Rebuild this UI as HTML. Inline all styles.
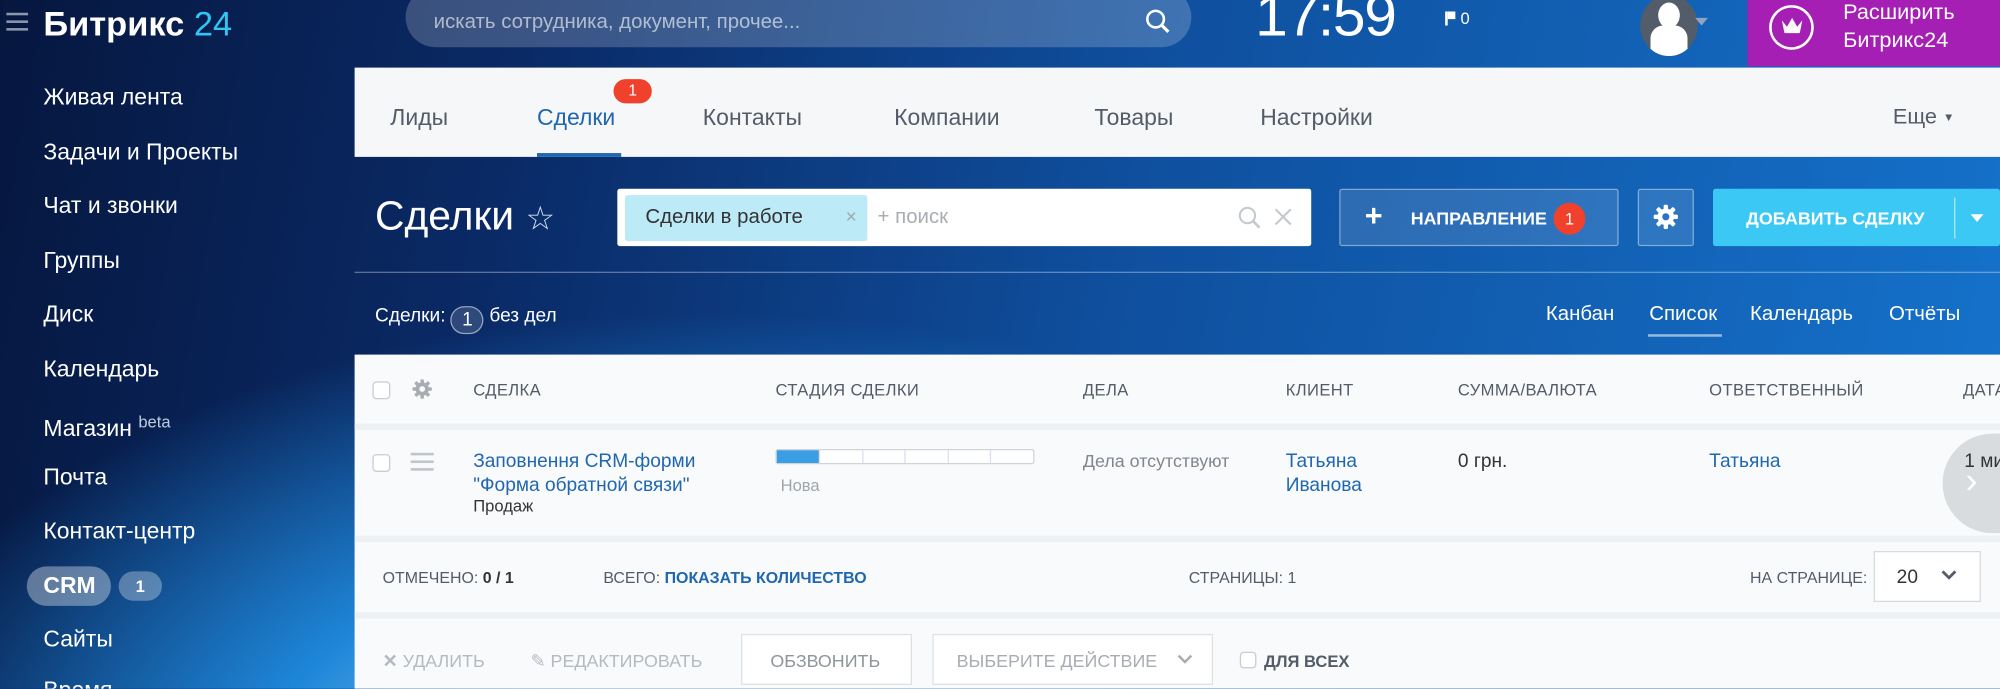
<!DOCTYPE html>
<html><head><meta charset="utf-8">
<style>
*{margin:0;padding:0;box-sizing:border-box}
html,body{width:2000px;height:689px;overflow:hidden}
body{font-family:"Liberation Sans",Arial,sans-serif;background:#0c2a63}
#w{position:absolute;left:0;top:0;width:1568px;height:540px;transform:scale(1.27551);transform-origin:0 0;overflow:hidden;
background:radial-gradient(ellipse 900px 500px at 560px 620px,#e8f4fb 0%,#7fc3ee 18%,#1e86d8 40%,rgba(20,100,200,0) 75%),linear-gradient(100deg,#06173f 0%,#0a2a66 25%,#0f4f9e 55%,#1573cc 100%)}
.a{position:absolute;white-space:nowrap}
.side{color:#fff;font-size:18px;left:34px;line-height:20px}
.tab{top:82px;font-size:18px;color:#535c69;line-height:20px}
.hd{top:298px;font-size:13px;color:#535c69;letter-spacing:.3px;line-height:15px}
.lnk{color:#2067b0}
.ft{font-size:12.5px;color:#535c69;line-height:14px;top:446px}
.cb{position:absolute;width:14px;height:14px;border:1px solid #c6cdd3;border-radius:3px;background:#fff}
</style></head><body><div id="w">
<div class="a" style="left:5px;top:10px;width:17px">
<div style="height:2px;background:#8a97ac;margin-bottom:4px"></div><div style="height:2px;background:#8a97ac;margin-bottom:4px"></div><div style="height:2px;background:#8a97ac"></div></div>
<div class="a" style="left:34px;top:4px;font-size:27px;color:#fff;font-weight:bold;line-height:30px">Битрикс <span style="color:#2fc6f6;font-weight:normal">24</span></div>
<div class="a" style="left:318px;top:-10px;width:616px;height:47px;border-radius:24px;background:rgba(255,255,255,.2)"></div>
<div class="a" style="left:340px;top:9px;font-size:16px;color:rgba(255,255,255,.6);line-height:18px">искать сотрудника, документ, прочее...</div>
<svg class="a" style="left:897px;top:6px" width="22" height="22" viewBox="0 0 22 22"><circle cx="9" cy="9" r="6.5" fill="none" stroke="#fff" stroke-width="2"/><path d="M14 14l5 5" stroke="#fff" stroke-width="2.5"/></svg>
<div class="a" style="left:984px;top:-14px;font-size:46px;color:#fff;font-weight:300;line-height:52px;letter-spacing:-1px">17:59</div>
<div class="a" style="left:1133px;top:7px;font-size:13px;color:#fff;line-height:15px"><span style="display:inline-block;width:2px;height:11px;background:#fff;vertical-align:-1px"></span><span style="display:inline-block;width:6px;height:6px;background:#fff;vertical-align:4px;margin-right:4px"></span>0</div>
<div class="a" style="left:1286px;top:-4px;width:45px;height:48px;border-radius:50%;background:#535c69;overflow:hidden">
<div style="position:absolute;left:14px;top:6px;width:17px;height:20px;border-radius:50%;background:#fff"></div>
<div style="position:absolute;left:8px;top:24px;width:29px;height:24px;border-radius:10px 10px 0 0;background:#fff"></div></div>
<div class="a" style="left:1328px;top:14px;border-left:5px solid transparent;border-right:5px solid transparent;border-top:6px solid #8fa3c2;left:1329px"></div>
<div class="a" style="left:1370px;top:0;width:198px;height:52px;background:#a51fb4"></div>
<div class="a" style="left:1387px;top:4px;width:35px;height:35px;border:2px solid #fff;border-radius:50%"></div>
<svg class="a" style="left:1395px;top:12px" width="20" height="16" viewBox="0 0 20 16"><path d="M2 4l4 5 4-7 4 7 4-5-2 10H4z" fill="#fff"/></svg>
<div class="a" style="left:1445px;top:-1px;font-size:17px;color:#fff;line-height:22px">Расширить<br>Битрикс24</div>
<div class="a side" style="top:66px">Живая лента</div>
<div class="a side" style="top:109px">Задачи и Проекты</div>
<div class="a side" style="top:151px">Чат и звонки</div>
<div class="a side" style="top:194px">Группы</div>
<div class="a side" style="top:236px">Диск</div>
<div class="a side" style="top:279px">Календарь</div>
<div class="a side" style="top:321px">Магазин <sup style="font-size:13px;color:#bcd">beta</sup></div>
<div class="a side" style="top:364px">Почта</div>
<div class="a side" style="top:406px">Контакт-центр</div>
<div class="a" style="left:21px;top:444px;width:66px;height:31px;border-radius:16px;background:rgba(255,255,255,.35)"></div>
<div class="a side" style="top:449px;font-weight:bold">CRM</div>
<div class="a" style="left:93px;top:448px;width:34px;height:23px;border-radius:12px;background:rgba(255,255,255,.3);color:#fff;font-size:13px;font-weight:bold;text-align:center;line-height:23px">1</div>
<div class="a side" style="top:491px">Сайты</div>
<div class="a side" style="top:531px">Время</div>
<div class="a" style="left:278px;top:53px;width:1290px;height:70px;background:#f5f7f8"></div>
<div class="a tab" style="left:306px">Лиды</div>
<div class="a tab" style="left:421px;color:#2067b0">Сделки</div>
<div class="a" style="left:421px;top:120px;width:66px;height:3px;background:#2067b0"></div>
<div class="a" style="left:481px;top:62px;width:30px;height:19px;border-radius:10px;background:#f0412d;color:#fff;font-size:12px;text-align:center;line-height:19px">1</div>
<div class="a tab" style="left:551px">Контакты</div>
<div class="a tab" style="left:701px">Компании</div>
<div class="a tab" style="left:858px">Товары</div>
<div class="a tab" style="left:988px">Настройки</div>
<div class="a tab" style="left:1484px;font-size:17px">Еще <span style="font-size:9px;vertical-align:2px">▼</span></div>
<div class="a" style="left:294px;top:151px;font-size:32px;color:#fff;font-weight:300;line-height:36px">Сделки <span style="font-size:26px;color:#cfe0f2">☆</span></div>
<div class="a" style="left:484px;top:148px;width:544px;height:45px;background:#fff;border-radius:2px"></div>
<div class="a" style="left:490px;top:153px;width:190px;height:36px;background:#bdeaf7;border-radius:2px"></div>
<div class="a" style="left:506px;top:162px;font-size:16px;color:#333;line-height:18px">Сделки в работе</div>
<div class="a" style="left:663px;top:162px;font-size:15px;color:#9aaab2;line-height:18px">×</div>
<div class="a" style="left:688px;top:162px;font-size:16px;color:#a8adb4;line-height:18px">+ поиск</div>
<svg class="a" style="left:969px;top:160px" width="22" height="22" viewBox="0 0 22 22"><circle cx="9" cy="9" r="6" fill="none" stroke="#c3c8cc" stroke-width="1.6"/><path d="M13.5 13.5l5 5" stroke="#c3c8cc" stroke-width="2"/></svg>
<svg class="a" style="left:998px;top:162px" width="16" height="16" viewBox="0 0 16 16"><path d="M2 2l12 12M14 2L2 14" stroke="#c3c8cc" stroke-width="1.6"/></svg>
<div class="a" style="left:1050px;top:148px;width:219px;height:45px;border:1px solid rgba(255,255,255,.4);background:rgba(255,255,255,.12);border-radius:2px"></div>
<div class="a" style="left:1070px;top:157px;font-size:24px;color:#fff;font-weight:bold;line-height:26px">+</div>
<div class="a" style="left:1106px;top:163px;font-size:14px;color:#fff;font-weight:bold;line-height:16px">НАПРАВЛЕНИЕ</div>
<div class="a" style="left:1218px;top:159px;width:25px;height:25px;border-radius:50%;background:#f0412d;color:#fff;font-size:13px;text-align:center;line-height:25px">1</div>
<div class="a" style="left:1284px;top:148px;width:44px;height:45px;border:1px solid rgba(255,255,255,.4);background:rgba(255,255,255,.12);border-radius:2px"></div>
<svg class="a" style="left:1296px;top:160px" width="20" height="20" viewBox="0 0 20 20"><g fill="#fff"><circle cx="10" cy="10" r="6.5"/><rect x="8.3" y="0.5" width="3.4" height="19" rx="1"/><rect x="8.3" y="0.5" width="3.4" height="19" rx="1" transform="rotate(45 10 10)"/><rect x="8.3" y="0.5" width="3.4" height="19" rx="1" transform="rotate(90 10 10)"/><rect x="8.3" y="0.5" width="3.4" height="19" rx="1" transform="rotate(135 10 10)"/></g><circle cx="10" cy="10" r="2.8" fill="#2a73c7"/></svg>
<div class="a" style="left:1343px;top:148px;width:225px;height:45px;background:#3bc8f5;border-radius:2px"></div>
<div class="a" style="left:1369px;top:163px;font-size:14px;color:#fff;font-weight:bold;line-height:16px">ДОБАВИТЬ СДЕЛКУ</div>
<div class="a" style="left:1532px;top:155px;width:1px;height:32px;background:rgba(255,255,255,.6)"></div>
<div class="a" style="left:1545px;top:168px;border-left:5px solid transparent;border-right:5px solid transparent;border-top:6px solid #fff"></div>
<div class="a" style="left:278px;top:213px;width:1290px;height:1px;background:rgba(255,255,255,.35)"></div>
<div class="a" style="left:294px;top:239px;font-size:15px;color:#fff;line-height:17px">Сделки: <span style="display:inline-block;width:26px;height:22px;border:1px solid rgba(255,255,255,.5);border-radius:11px;background:rgba(255,255,255,.15);text-align:center;line-height:20px;vertical-align:-3px">1</span> без дел</div>
<div class="a" style="left:1212px;top:238px;font-size:16px;color:#fff;line-height:18px">Канбан</div>
<div class="a" style="left:1293px;top:238px;font-size:16px;color:#fff;line-height:18px">Список</div>
<div class="a" style="left:1292px;top:262px;width:58px;height:2px;background:rgba(255,255,255,.55)"></div>
<div class="a" style="left:1372px;top:238px;font-size:16px;color:#fff;line-height:18px">Календарь</div>
<div class="a" style="left:1481px;top:238px;font-size:16px;color:#fff;line-height:18px">Отчёты</div>
<div class="a" style="left:278px;top:278px;width:1290px;height:262px;background:#f8fafb"></div>
<div class="a" style="left:278px;top:332px;width:1290px;height:5px;background:#eef1f3"></div>
<div class="a" style="left:278px;top:420px;width:1290px;height:5px;background:#eef1f3"></div>
<div class="a" style="left:278px;top:480px;width:1290px;height:5px;background:#eef1f3"></div>
<div class="cb" style="left:292px;top:299px"></div>
<svg class="a" style="left:323px;top:297px" width="16" height="16" viewBox="0 0 20 20"><g fill="#a8adb4"><circle cx="10" cy="10" r="6.5"/><rect x="8.3" y="0.5" width="3.4" height="19" rx="1"/><rect x="8.3" y="0.5" width="3.4" height="19" rx="1" transform="rotate(45 10 10)"/><rect x="8.3" y="0.5" width="3.4" height="19" rx="1" transform="rotate(90 10 10)"/><rect x="8.3" y="0.5" width="3.4" height="19" rx="1" transform="rotate(135 10 10)"/></g><circle cx="10" cy="10" r="2.8" fill="#f8fafb"/></svg>
<div class="a hd" style="left:371px">СДЕЛКА</div>
<div class="a hd" style="left:608px">СТАДИЯ СДЕЛКИ</div>
<div class="a hd" style="left:849px">ДЕЛА</div>
<div class="a hd" style="left:1008px">КЛИЕНТ</div>
<div class="a hd" style="left:1143px">СУММА/ВАЛЮТА</div>
<div class="a hd" style="left:1340px">ОТВЕТСТВЕННЫЙ</div>
<div class="a hd" style="left:1539px">ДАТА</div>
<div class="cb" style="left:292px;top:356px"></div>
<div class="a" style="left:322px;top:355px;width:18px"><div style="height:2px;background:#c0c5ca;margin-bottom:4px"></div><div style="height:2px;background:#c0c5ca;margin-bottom:4px"></div><div style="height:2px;background:#c0c5ca"></div></div>
<div class="a lnk" style="left:371px;top:352px;font-size:15px;line-height:19px">Заповнення CRM-форми<br>"Форма обратной связи"</div>
<div class="a" style="left:371px;top:389px;font-size:13px;color:#333;line-height:15px">Продаж</div>
<div class="a" style="left:608px;top:352px;width:203px;height:12px;border:1px solid #cfd4d8;background:#fff;border-radius:2px;display:flex">
<div style="width:33px;background:#3b9de3"></div>
<div style="flex:1;border-left:1px solid #dde"></div><div style="flex:1;border-left:1px solid #dde"></div><div style="flex:1;border-left:1px solid #dde"></div><div style="flex:1;border-left:1px solid #dde"></div><div style="flex:1;border-left:1px solid #dde"></div></div>
<div class="a" style="left:612px;top:373px;font-size:13px;color:#a0a5ab;line-height:15px">Нова</div>
<div class="a" style="left:849px;top:353px;font-size:14px;color:#80868e;line-height:16px">Дела отсутствуют</div>
<div class="a lnk" style="left:1008px;top:352px;font-size:15px;line-height:19px">Татьяна<br>Иванова</div>
<div class="a" style="left:1143px;top:352px;font-size:15px;color:#333;line-height:19px">0 грн.</div>
<div class="a lnk" style="left:1340px;top:352px;font-size:15px;line-height:19px">Татьяна</div>
<div class="a" style="left:1523px;top:340px;width:90px;height:78px;border-radius:45px;background:rgba(205,209,213,.75)"></div>
<div class="a" style="left:1540px;top:352px;font-size:15px;color:#333;line-height:19px">1 ми</div>
<div class="a" style="left:1541px;top:362px;font-size:28px;color:#fff;line-height:30px">›</div>
<div class="a ft" style="left:300px">ОТМЕЧЕНО: <b style="color:#333">0 / 1</b></div>
<div class="a ft" style="left:473px">ВСЕГО: <span class="lnk" style="font-weight:bold">ПОКАЗАТЬ КОЛИЧЕСТВО</span></div>
<div class="a ft" style="left:932px">СТРАНИЦЫ: 1</div>
<div class="a ft" style="left:1372px">НА СТРАНИЦЕ:</div>
<div class="a" style="left:1469px;top:432px;width:84px;height:40px;border:1px solid #d5dadd;background:#fff"></div>
<div class="a" style="left:1487px;top:444px;font-size:15px;color:#333;line-height:17px">20</div>
<svg class="a" style="left:1521px;top:446px" width="14" height="10" viewBox="0 0 14 10"><path d="M2 2l5 5 5-5" fill="none" stroke="#535c69" stroke-width="2.2"/></svg>
<div class="a" style="left:300px;top:510px;font-size:14px;color:#b5bac0;line-height:16px"><b>✕</b> УДАЛИТЬ</div>
<div class="a" style="left:416px;top:510px;font-size:14px;color:#b5bac0;line-height:16px">✎ РЕДАКТИРОВАТЬ</div>
<div class="a" style="left:581px;top:497px;width:134px;height:40px;border:1px solid #dde1e4;background:#fff"></div>
<div class="a" style="left:604px;top:510px;font-size:14px;color:#8e959c;line-height:16px">ОБЗВОНИТЬ</div>
<div class="a" style="left:731px;top:497px;width:220px;height:40px;border:1px solid #dde1e4;background:#fff"></div>
<div class="a" style="left:750px;top:510px;font-size:14px;color:#a8adb4;line-height:16px">ВЫБЕРИТЕ ДЕЙСТВИЕ</div>
<svg class="a" style="left:922px;top:512px" width="14" height="10" viewBox="0 0 14 10"><path d="M2 2l5 5 5-5" fill="none" stroke="#a8adb4" stroke-width="2"/></svg>
<div class="cb" style="left:972px;top:511px;width:13px;height:13px"></div>
<div class="a" style="left:991px;top:511px;font-size:13px;color:#535c69;font-weight:bold;line-height:15px">ДЛЯ ВСЕХ</div>
</div></body></html>
